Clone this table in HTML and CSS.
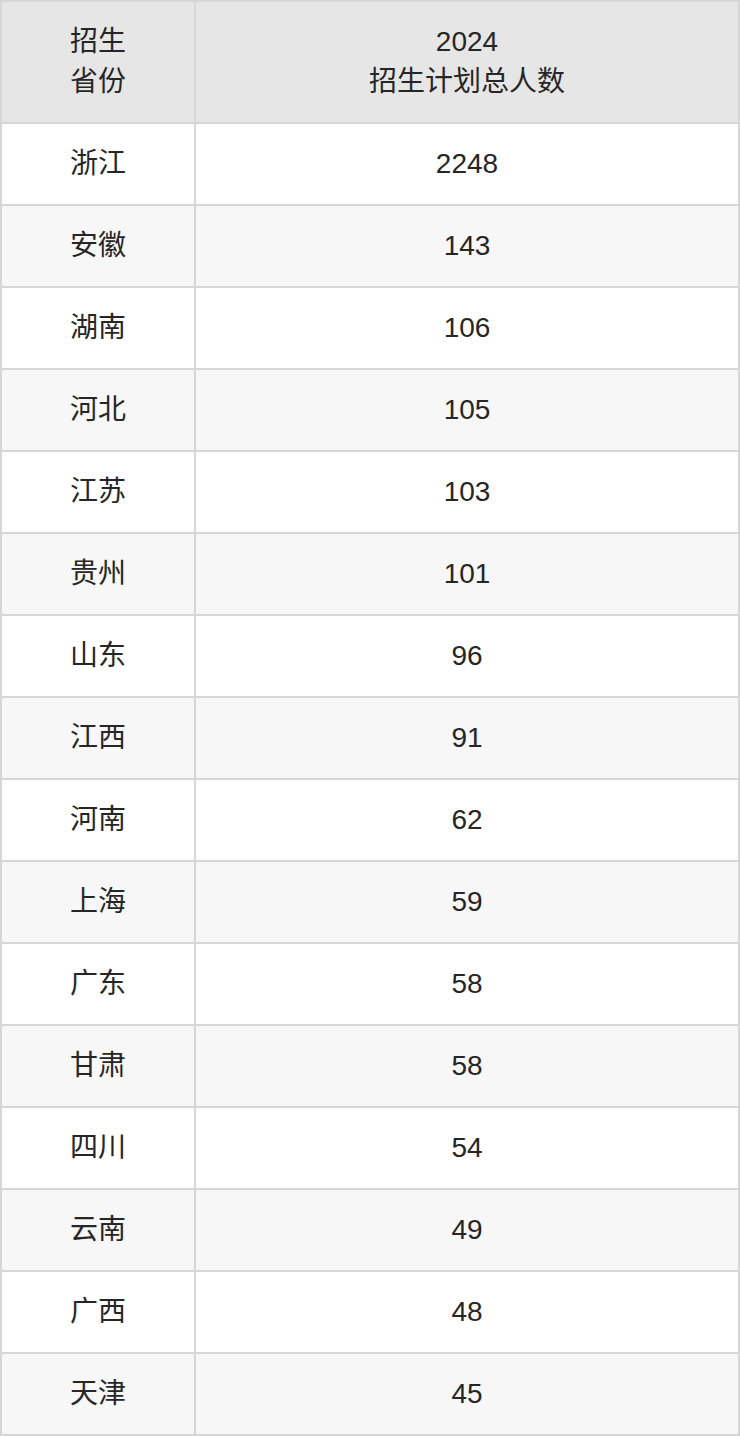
FILE: index.html
```html
<!DOCTYPE html>
<html lang="zh">
<head>
<meta charset="utf-8">
<title>招生计划</title>
<link rel="stylesheet" href="styles.css">
</head>
<body>
<table class="plan">
  <colgroup><col class="c1"><col class="c2"></colgroup>
  <thead>
    <tr><th>招生<br>省份</th><th>2024<br>招生计划总人数</th></tr>
  </thead>
  <tbody>
    <tr><td>浙江</td><td>2248</td></tr>
    <tr><td>安徽</td><td>143</td></tr>
    <tr><td>湖南</td><td>106</td></tr>
    <tr><td>河北</td><td>105</td></tr>
    <tr><td>江苏</td><td>103</td></tr>
    <tr><td>贵州</td><td>101</td></tr>
    <tr><td>山东</td><td>96</td></tr>
    <tr><td>江西</td><td>91</td></tr>
    <tr><td>河南</td><td>62</td></tr>
    <tr><td>上海</td><td>59</td></tr>
    <tr><td>广东</td><td>58</td></tr>
    <tr><td>甘肃</td><td>58</td></tr>
    <tr><td>四川</td><td>54</td></tr>
    <tr><td>云南</td><td>49</td></tr>
    <tr><td>广西</td><td>48</td></tr>
    <tr><td>天津</td><td>45</td></tr>
  </tbody>
</table>
</body>
</html>
```
FILE: styles.css
```css
html, body {
  margin: 0;
  padding: 0;
  background: #ffffff;
}
.plan {
  width: 740px;
  border-collapse: collapse;
  table-layout: fixed;
  font-family: "Liberation Sans", "Noto Sans CJK SC", sans-serif;
  font-size: 28px;
  line-height: 40px;
  color: #262626;
}
.plan .c1 { width: 194px; }
.plan th,
.plan td {
  border: 2px solid #d6d6d6;
  text-align: center;
  vertical-align: middle;
  padding: 20px 0;
  font-weight: normal;
}
.plan th {
  background: #e6e6e6;
  height: 80px;
}
.plan td {
  height: 40px;
}
.plan tbody tr:nth-child(even) td {
  background: #f7f7f7;
}
```
